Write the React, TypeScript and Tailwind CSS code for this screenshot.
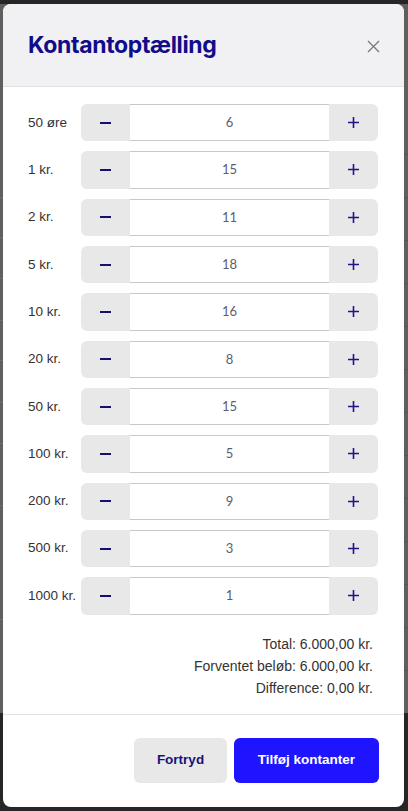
import React from "react";

const rows: [string, number][] = [
  ["50 øre", 6],
  ["1 kr.", 15],
  ["2 kr.", 11],
  ["5 kr.", 18],
  ["10 kr.", 16],
  ["20 kr.", 8],
  ["50 kr.", 15],
  ["100 kr.", 5],
  ["200 kr.", 9],
  ["500 kr.", 3],
  ["1000 kr.", 1],
];

const leftLines = [197, 237, 278, 320, 360, 402, 443, 505, 619];
const rightLines = [154, 197, 240, 283, 326, 369, 412, 455, 498, 541, 584, 627, 670];

export default function App() {
  return (
    <div className="relative w-[408px] h-[811px] overflow-hidden bg-[#262626]" style={{ fontFamily: '"Liberation Sans", Arial, sans-serif' }}>
      {/* dimmed page behind */}
      <div className="absolute left-0 right-0 top-[4px] h-[709px] bg-[#5f5f5f]">
        {leftLines.map((y) => (
          <div key={y} className="absolute left-0 w-[3px] h-px bg-[#6e6e6e]" style={{ top: y - 4 }} />
        ))}
        {rightLines.map((y) => (
          <div key={y} className="absolute right-0 w-[5px] h-px bg-[#555]" style={{ top: y - 4 }} />
        ))}
      </div>

      {/* modal */}
      <div className="absolute left-[3px] top-[4px] w-[401px] h-[803px] bg-white rounded-[8px] overflow-hidden flex flex-col">
        <div className="h-[83px] shrink-0 bg-[#f1f1f4] border-b border-[#e2e2e6] flex items-center justify-between pl-[25px] pr-[24px]">
          <h1 className="text-[23px] font-bold text-[#100c8a] tracking-[-0.35px] mt-[1px]" style={{ fontFamily: 'Inter, "Noto Sans", sans-serif' }}>
            Kontantoptælling
          </h1>
          <svg width="13" height="13" viewBox="0 0 13 13" className="mt-[2px]">
            <path d="M1 1L12 12M12 1L1 12" stroke="#7a7a80" strokeWidth="1.4" />
          </svg>
        </div>

        <div className="flex flex-col gap-[10px] pl-[25px] pr-[26px] pt-[17px]">
          {rows.map(([label, val]) => (
            <div key={label} className="flex items-center h-[37.33px]">
              <div className="w-[53px] shrink-0 text-[13.5px] text-[#333]">{label}</div>
              <div className="flex flex-1 h-full">
                <div className="w-[49px] h-full bg-[#e8e8e8] rounded-l-[6px] flex items-center justify-center">
                  <div className="w-[11px] h-[2px] bg-[#13106e]" />
                </div>
                <div className="flex-1 h-full bg-white border-y border-[#c8c8c8] flex items-center justify-center text-[13px] text-[#5b5e6e]" style={{ fontFamily: 'Lato, "Noto Sans", sans-serif' }}>
                  {val}
                </div>
                <div className="w-[49px] h-full bg-[#e8e8e8] rounded-r-[6px] flex items-center justify-center">
                  <svg width="11" height="11" viewBox="0 0 11 11">
                    <path d="M5.5 0V11M0 5.5H11" stroke="#2a0f8a" strokeWidth="1.6" />
                  </svg>
                </div>
              </div>
            </div>
          ))}
        </div>

        <div className="flex flex-col items-end pr-[31px] pt-[18px] text-[14px] text-[#333] leading-[22px]">
          <div>Total: 6.000,00 kr.</div>
          <div>Forventet beløb: 6.000,00 kr.</div>
          <div>Difference: 0,00 kr.</div>
        </div>

        <div className="mt-[15px] border-t border-[#e2e2e2] flex justify-end gap-[7px] pr-[25px] pt-[23px]">
          <button className="w-[93px] h-[45px] rounded-[6px] bg-[#e8e8e8] text-[13.5px] font-bold text-[#16127a]">Fortryd</button>
          <button className="w-[145px] h-[45px] rounded-[6px] bg-[#1f14ff] text-[13.5px] font-bold text-white">Tilføj kontanter</button>
        </div>
      </div>
    </div>
  );
}
